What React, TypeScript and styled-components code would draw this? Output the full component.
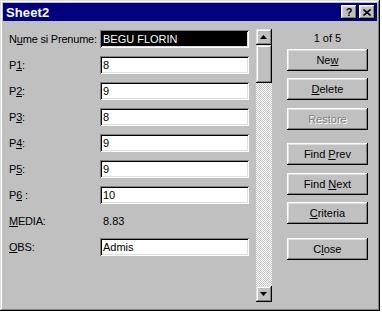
import React from "react";
import styled, { createGlobalStyle } from "styled-components";

const Global = createGlobalStyle`
  html, body { margin: 0; padding: 0; background: #ffffff; }
  body { font-family: "Liberation Sans", Arial, sans-serif; font-size: 11px; color: #000; }
  u { text-decoration: underline; text-underline-offset: 1px; }
`;

const Window = styled.div`
  box-sizing: border-box;
  width: 380px;
  height: 311px;
  padding: 3px;
  background: #c0c0c0;
  display: flex;
  flex-direction: column;
  box-shadow: inset -1px -1px #000, inset 1px 1px #dfdfdf, inset -2px -2px #808080, inset 2px 2px #fff;
`;

const TitleBar = styled.div`
  height: 18px;
  flex: none;
  background: #000080;
  display: flex;
  align-items: center;
  justify-content: space-between;
  padding: 0 2px 0 3px;
`;

const Title = styled.span`
  color: #fff;
  font-weight: bold;
  font-size: 13px;
  letter-spacing: 0.1px;
`;

const TitleButtons = styled.div`
  display: flex;
  gap: 2px;
`;

const TitleButton = styled.div`
  width: 16px;
  height: 14px;
  box-sizing: border-box;
  background: #c0c0c0;
  display: flex;
  align-items: center;
  justify-content: center;
  font-weight: bold;
  font-size: 11px;
  line-height: 14px;
  box-shadow: inset -1px -1px #000, inset 1px 1px #fff, inset -2px -2px #808080, inset 2px 2px #dfdfdf;
`;

const Body = styled.div`
  flex: 1;
  display: flex;
  padding: 8px 9px 6px 6px;
  min-height: 0;
`;

const Form = styled.div`
  width: 240px;
  margin-top: 1px;
  display: grid;
  grid-template-columns: 91px 149px;
  grid-auto-rows: 18px;
  row-gap: 8px;
  align-content: start;
`;

const Label = styled.div`
  line-height: 18px;
  white-space: nowrap;
  letter-spacing: -0.2px;
`;

const Field = styled.div<{ $selected?: boolean }>`
  box-sizing: border-box;
  height: 18px;
  line-height: 18px;
  padding-left: 3px;
  background: ${(p) => (p.$selected ? "#000" : "#fff")};
  color: ${(p) => (p.$selected ? "#fff" : "#000")};
  box-shadow: inset 1px 1px #808080, inset -1px -1px #fff, inset 2px 2px #000, inset -2px -2px #dfdfdf;
  white-space: nowrap;
  overflow: hidden;
`;

const Value = styled.div`
  line-height: 18px;
  padding-left: 3px;
`;

const ScrollBar = styled.div`
  width: 16px;
  margin-left: 7px;
  display: flex;
  flex-direction: column;
  background-color: #fff;
  background-image: conic-gradient(#c0c0c0 25%, #fff 0 50%, #c0c0c0 0 75%, #fff 0);
  background-size: 2px 2px;
`;

const ScrollButton = styled.div<{ $h: number }>`
  box-sizing: border-box;
  height: ${(p) => p.$h}px;
  flex: none;
  background: #c0c0c0;
  display: flex;
  align-items: center;
  justify-content: center;
  box-shadow: inset -1px -1px #000, inset 1px 1px #dfdfdf, inset -2px -2px #808080, inset 2px 2px #fff;
`;

const Track = styled.div`
  flex: 1;
`;

const Side = styled.div`
  width: 82px;
  margin-left: 15px;
  display: flex;
  flex-direction: column;
`;

const Counter = styled.div`
  height: 16px;
  line-height: 16px;
  margin: 1px 0 3px;
  text-align: center;
`;

const Button = styled.div<{ $gap: number; $disabled?: boolean }>`
  box-sizing: border-box;
  height: 22px;
  margin-top: ${(p) => p.$gap}px;
  background: #c0c0c0;
  display: flex;
  align-items: center;
  justify-content: center;
  white-space: pre;
  color: ${(p) => (p.$disabled ? "#808080" : "#000")};
  text-shadow: ${(p) => (p.$disabled ? "1px 1px #fff" : "none")};
  box-shadow: inset -1px -1px #000, inset 1px 1px #fff, inset -2px -2px #808080, inset 2px 2px #dfdfdf;
`;

const Caption = styled.span`
  white-space: pre;
`;

const Arrow = ({ up }: { up?: boolean }) => (
  <svg width="7" height="4" viewBox="0 0 7 4">
    <polygon points={up ? "3.5,0 7,4 0,4" : "0,0 7,0 3.5,4"} fill="#000" />
  </svg>
);

const rows: [React.ReactNode, string][] = [
  [<>P<u>1</u>:</>, "8"],
  [<>P<u>2</u>:</>, "9"],
  [<>P<u>3</u>:</>, "8"],
  [<>P<u>4</u>:</>, "9"],
  [<>P<u>5</u>:</>, "9"],
  [<>P<u>6</u> :</>, "10"],
];

export default function App() {
  return (
    <>
      <Global />
      <Window>
        <TitleBar>
          <Title>Sheet2</Title>
          <TitleButtons>
            <TitleButton>?</TitleButton>
            <TitleButton>
              <svg width="8" height="7" viewBox="0 0 8 7">
                <path d="M0.5 0.5 L7.5 6.5 M7.5 0.5 L0.5 6.5" stroke="#000" strokeWidth="1.6" />
              </svg>
            </TitleButton>
          </TitleButtons>
        </TitleBar>
        <Body>
          <Form>
            <Label>N<u>u</u>me si Prenume:</Label>
            <Field $selected>BEGU FLORIN</Field>
            {rows.map(([label, value], i) => (
              <React.Fragment key={i}>
                <Label>{label}</Label>
                <Field>{value}</Field>
              </React.Fragment>
            ))}
            <Label><u>M</u>EDIA:</Label>
            <Value>8.83</Value>
            <Label><u>O</u>BS:</Label>
            <Field>Admis</Field>
          </Form>
          <ScrollBar>
            <ScrollButton $h={16}><Arrow up /></ScrollButton>
            <ScrollButton $h={38} />
            <Track />
            <ScrollButton $h={16}><Arrow /></ScrollButton>
          </ScrollBar>
          <Side>
            <Counter>1 of 5</Counter>
            <Button $gap={0}><Caption>Ne<u>w</u></Caption></Button>
            <Button $gap={7}><Caption><u>D</u>elete</Caption></Button>
            <Button $gap={8} $disabled><Caption>Restore</Caption></Button>
            <Button $gap={13}><Caption>Find <u>P</u>rev</Caption></Button>
            <Button $gap={8}><Caption>Find <u>N</u>ext</Caption></Button>
            <Button $gap={7}><Caption><u>C</u>riteria</Caption></Button>
            <Button $gap={14}><Caption>C<u>l</u>ose</Caption></Button>
          </Side>
        </Body>
      </Window>
    </>
  );
}
